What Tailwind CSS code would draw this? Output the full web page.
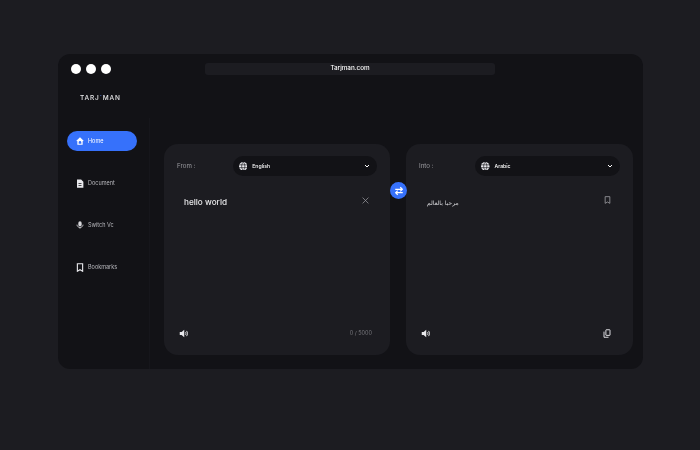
<!DOCTYPE html>
<html lang="en">
<head>
  <meta charset="UTF-8" />
  <title>Tarjman</title>
  <script src="https://cdn.jsdelivr.net/npm/@tailwindcss/browser@4"></script>
</head>
<body class="bg-[#1c1c21] w-[700px] h-[450px] overflow-hidden font-['Inter','Noto_Sans',sans-serif]">
  <div class="pt-[54px] pl-[58px]">
    <!-- Window -->
    <div class="w-[585px] h-[315px] rounded-[12px] bg-[#121216] flex flex-col will-change-transform">

      <!-- Title bar -->
      <div class="h-[30px] flex items-center shrink-0">
        <div class="flex gap-[5px] pl-[13px]">
          <span class="w-[10px] h-[10px] rounded-full bg-white"></span>
          <span class="w-[10px] h-[10px] rounded-full bg-white"></span>
          <span class="w-[10px] h-[10px] rounded-full bg-white"></span>
        </div>
        <div class="ml-[94px] w-[290px] h-[12px] rounded-[3px] bg-[#1c1c21] flex items-center justify-center text-[6.3px] font-medium text-white">Tarjman.com</div>
      </div>

      <div class="flex flex-1">
        <!-- Sidebar -->
        <aside class="w-[92px] shrink-0 flex flex-col">
          <div class="h-[34px] pl-[22px] pt-[10px] text-[6.5px] font-medium tracking-[0.85px] text-[#e8e8ea]">TARJ<span class="text-[#5a8bff]">`</span>MAN</div>
          <nav class="flex-1 border-r border-[#16161b] pl-[9px] pt-[13px] flex flex-col gap-[22px] text-[5.5px]">
            <a class="w-[70px] h-[20px] rounded-full bg-[#3671fb] flex items-center pl-[9px] gap-[4px] text-white">
              <svg class="w-[8px] h-[8px]" viewBox="0 0 24 24"><path fill="white" fill-rule="evenodd" d="M12 1 1 11l2 2 1-1v11h16V12l1 1 2-2zM8 20v-4a4 4 0 0 1 8 0v4z"/></svg>
              Home
            </a>
            <a class="w-[70px] h-[20px] flex items-center pl-[9px] gap-[4px] text-[#b8b8bd]">
              <svg class="w-[8px] h-[9px]" viewBox="0 0 20 24" fill="#e8e8ec"><path d="M2 1h11l6 6v16H2zM6 11v2h8v-2zM6 16v2h8v-2z" fill-rule="evenodd"/></svg>
              Document
            </a>
            <a class="w-[70px] h-[20px] flex items-center pl-[9px] gap-[4px] text-[#b8b8bd]">
              <svg class="w-[8px] h-[10px]" viewBox="0 0 24 24" fill="none"><rect x="7" y="1" width="10" height="15" rx="5" fill="#d8d8dc"/><path d="M3 11c0 11 18 11 18 0M12 18v5" stroke="#d8d8dc" stroke-width="2.500"/></svg>
              Switch Vc
            </a>
            <a class="w-[70px] h-[20px] flex items-center pl-[9px] gap-[4px] text-[#b8b8bd]">
              <svg class="w-[8px] h-[9px]" viewBox="0 0 20 24" fill="none" stroke="#e8e8ec" stroke-width="3"><path d="M3 2h14v20l-7-4-7 4z"/></svg>
              Bookmarks
            </a>
          </nav>
        </aside>

        <!-- Panels -->
        <main class="relative flex gap-[16px] pl-[14px] pt-[60px]">
          <section class="w-[226px] h-[211px] rounded-[14px] bg-[#1c1c21] flex flex-col px-[13px]">
            <div class="flex items-center pt-[12px]">
              <span class="w-[56px] text-[6.2px] text-[#9b9ba0]">From :</span>
              <div class="w-[145px] h-[20px] rounded-full bg-[#121216] flex items-center pl-[6px] pr-[7px] gap-[5px] text-[5.2px] font-medium text-white">
                <svg class="w-[8.5px] h-[8.5px]" viewBox="0 0 24 24" fill="none"><circle cx="12" cy="12" r="12" fill="#e8e8ec"/><path d="M12 0c-6 6-6 18 0 24M12 0c6 6 6 18 0 24M0 8h24M0 16h24" stroke="#121216" stroke-width="1.800"/></svg>
                <span class="mt-[1px]">English</span>
                <svg class="ml-auto w-[6px] h-[6px]" viewBox="0 0 24 24" fill="none" stroke="white" stroke-width="4"><path d="m4 8 8 8 8-8"/></svg>
              </div>
            </div>
            <div class="flex items-center justify-between pl-[7px] pr-[8px] mt-[20px]">
              <span class="text-[8.2px] font-medium text-[#e8e8ea]">hello world</span>
              <svg class="w-[7px] h-[7px] mb-[4px]" viewBox="0 0 24 24" fill="none" stroke="#9b9ba0" stroke-width="2.500"><path d="m2 2 20 20M22 2 2 22"/></svg>
            </div>
            <div class="mt-auto pb-[17px] flex items-center justify-between pr-[5px]">
              <svg class="w-[9px] h-[9px] ml-[2px]" viewBox="0 0 24 24" fill="none"><path d="M2 8h5l7-6v20l-7-6H2z" fill="#e8e8ec"/><path d="M17 8c2 2 2 6 0 8M20 5c3.500 4 3.500 10 0 14" stroke="#e8e8ec" stroke-width="2.500"/></svg>
              <span class="text-[5.5px] text-[#77777c]">0 / 5000</span>
            </div>
          </section>

          <section class="w-[227px] h-[211px] rounded-[14px] bg-[#1c1c21] flex flex-col px-[13px]">
            <div class="flex items-center pt-[12px]">
              <span class="w-[56px] text-[6.2px] text-[#9b9ba0]">Into :</span>
              <div class="w-[145px] h-[20px] rounded-full bg-[#121216] flex items-center pl-[6px] pr-[7px] gap-[5px] text-[5.2px] font-medium text-white">
                <svg class="w-[8.5px] h-[8.5px]" viewBox="0 0 24 24" fill="none"><circle cx="12" cy="12" r="12" fill="#e8e8ec"/><path d="M12 0c-6 6-6 18 0 24M12 0c6 6 6 18 0 24M0 8h24M0 16h24" stroke="#121216" stroke-width="1.800"/></svg>
                <span class="mt-[1px]">Arabic</span>
                <svg class="ml-auto w-[6px] h-[6px]" viewBox="0 0 24 24" fill="none" stroke="white" stroke-width="4"><path d="m4 8 8 8 8-8"/></svg>
              </div>
            </div>
            <div class="flex items-center justify-between pl-[8px] pr-[9px] mt-[19px]">
              <span dir="rtl" class="text-[6px] mt-[3px] text-[#d8d8dc] font-['DejaVu_Sans',sans-serif]">مرحبا بالعالم</span>
              <svg class="w-[7px] h-[8px] mb-[2px]" viewBox="0 0 20 24" fill="none" stroke="#9b9ba0" stroke-width="2.500"><path d="M3 2h14v20l-7-4-7 4z"/></svg>
            </div>
            <div class="mt-auto pb-[17px] flex items-center justify-between pr-[9px]">
              <svg class="w-[9px] h-[9px] ml-[2px]" viewBox="0 0 24 24" fill="none"><path d="M2 8h5l7-6v20l-7-6H2z" fill="#e8e8ec"/><path d="M17 8c2 2 2 6 0 8M20 5c3.500 4 3.500 10 0 14" stroke="#e8e8ec" stroke-width="2.500"/></svg>
              <svg class="w-[8px] h-[9px]" viewBox="0 0 20 24" fill="none" stroke="#e8e8ec" stroke-width="2.500"><rect x="7" y="2" width="11" height="15" rx="1"/><path d="M2 7v15h12"/></svg>
            </div>
          </section>

          <!-- Swap button over the gap between panels -->
          <button class="absolute left-[240px] top-[98px] w-[17px] h-[17px] rounded-full bg-[#3671fb] flex items-center justify-center">
            <svg class="w-[10px] h-[10px]" viewBox="0 0 24 24" fill="none" stroke="white" stroke-width="3"><path d="M3 8h17M15 3l5 5-5 5M21 16H4M9 11l-5 5 5 5"/></svg>
          </button>
        </main>
      </div>
    </div>
  </div>
</body>
</html>
